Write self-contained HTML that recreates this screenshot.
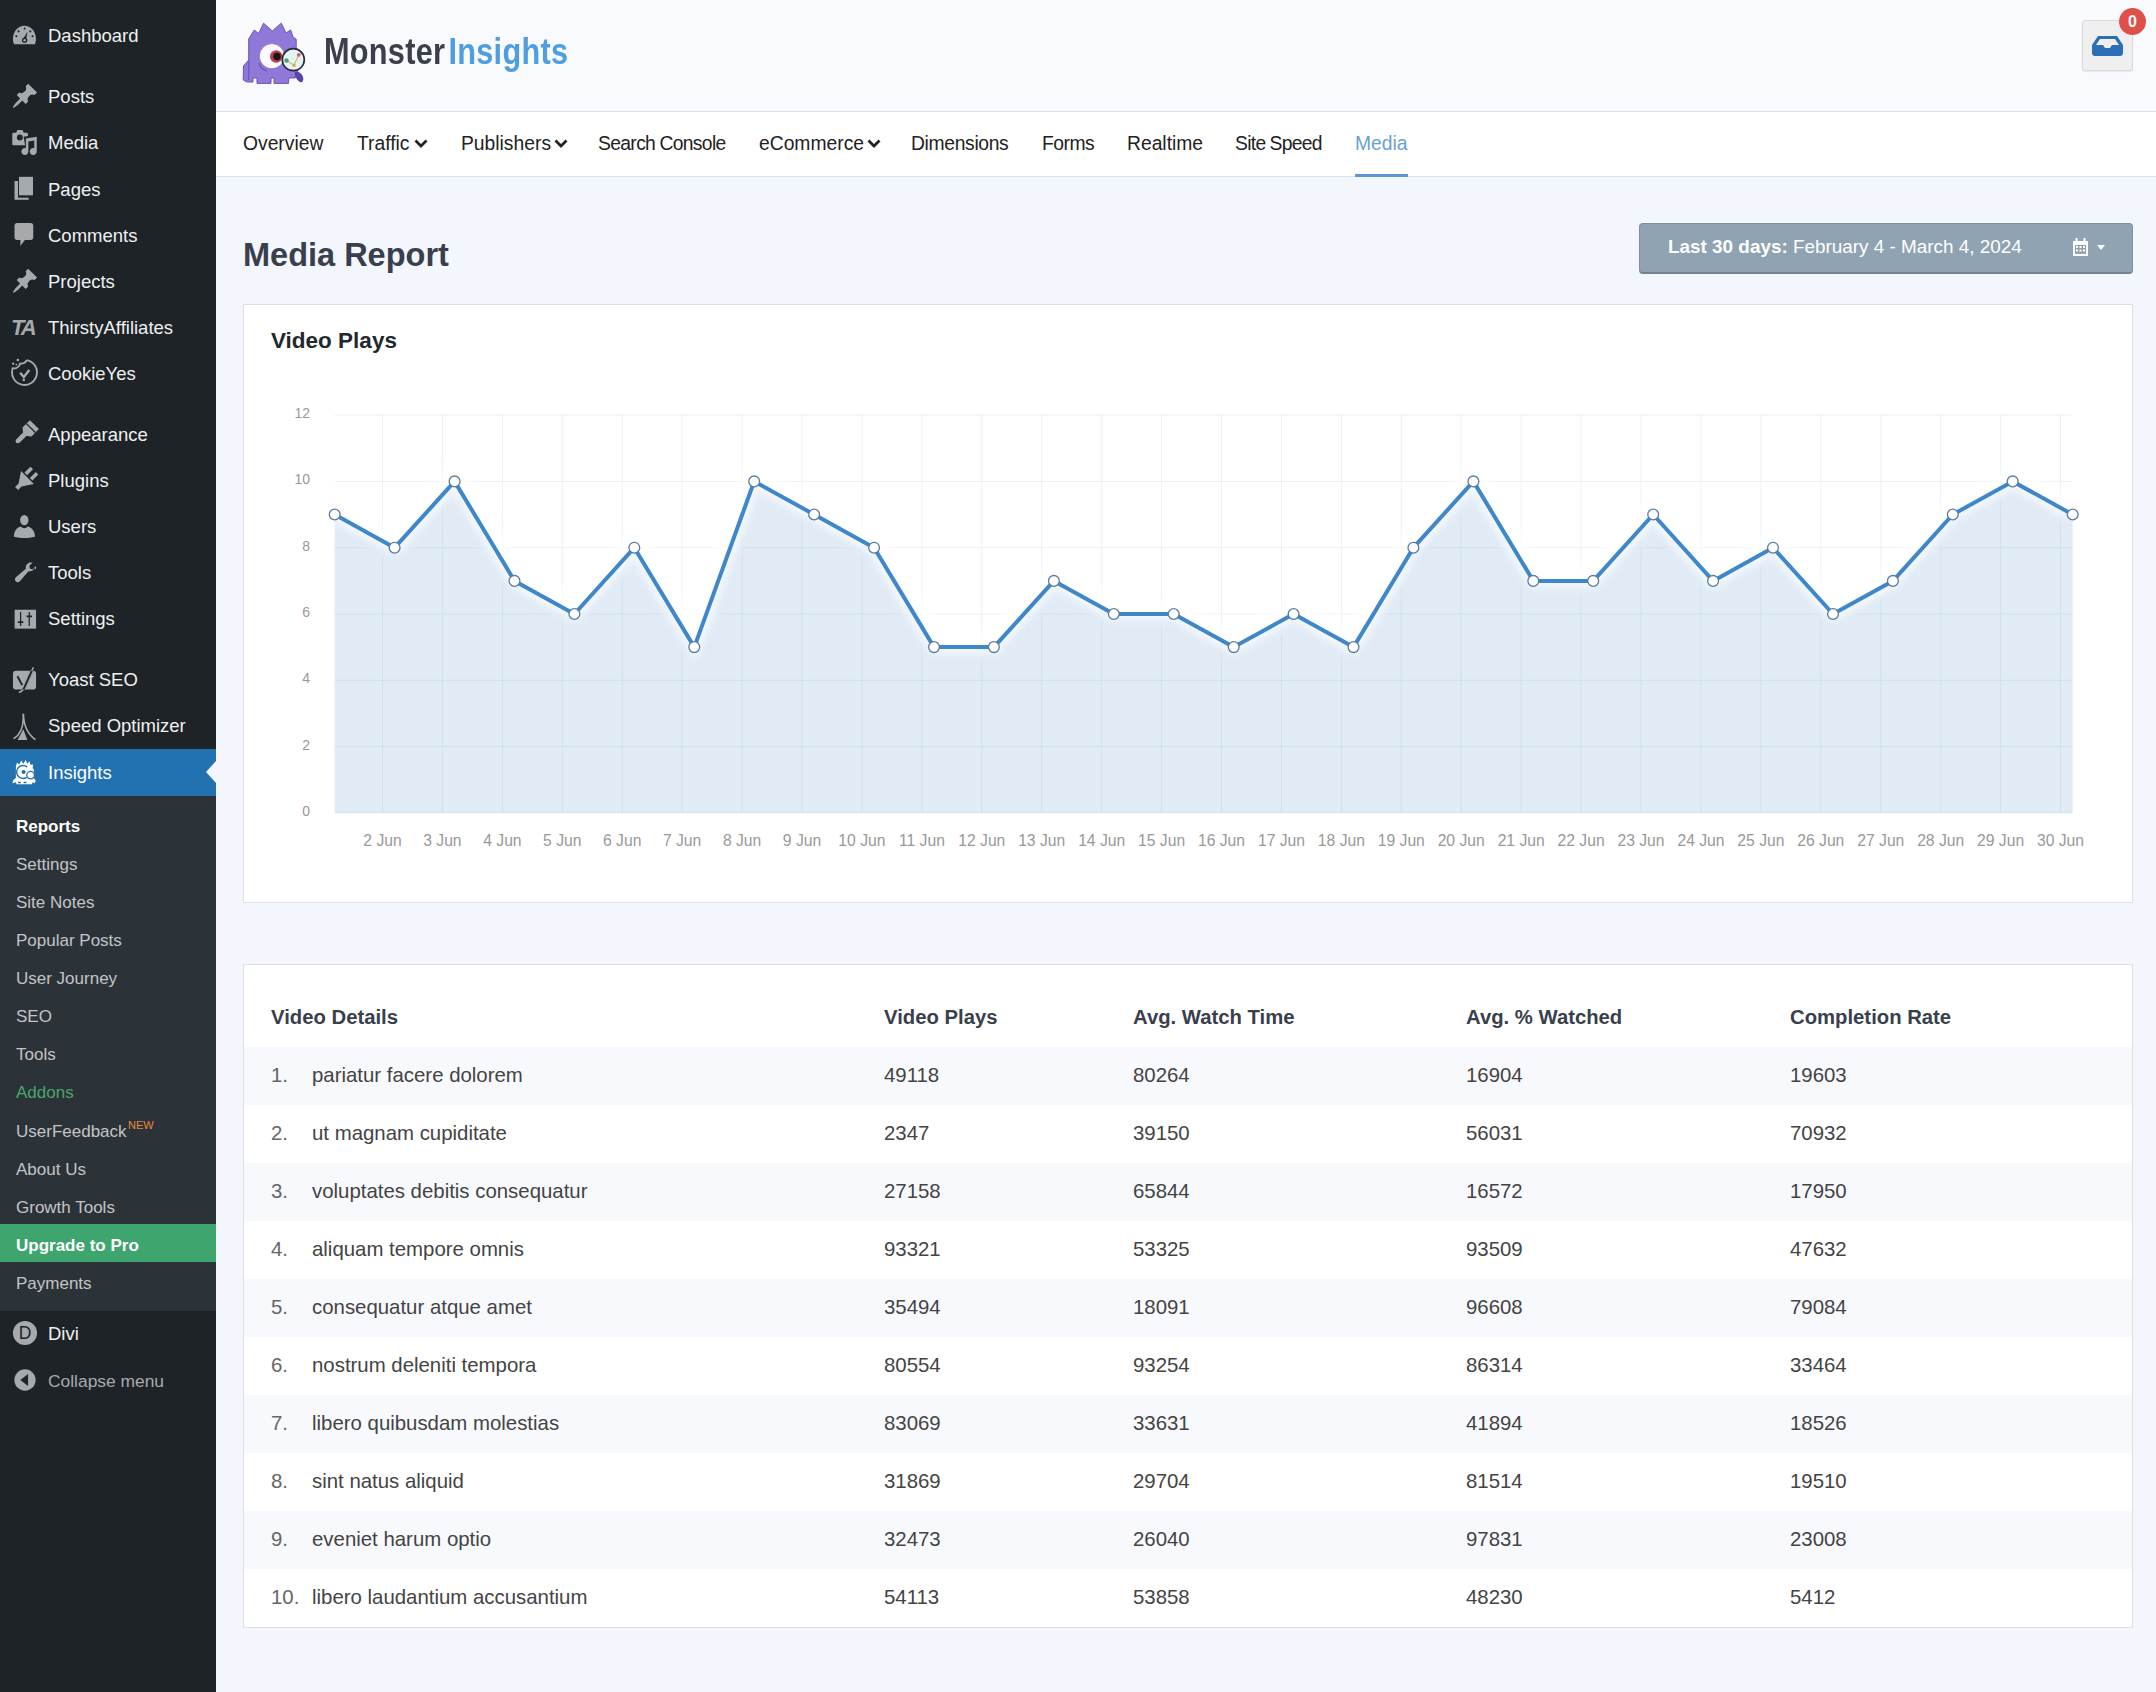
<!DOCTYPE html>
<html><head><meta charset="utf-8">
<style>
*{box-sizing:border-box;margin:0;padding:0}
html,body{width:2156px;height:1692px;overflow:hidden}
body{font-family:"Liberation Sans",sans-serif;background:#f3f6fc;position:relative}
.abs{position:absolute}
#side{position:absolute;left:0;top:0;width:216px;height:1692px;background:#1d2327}
.mi{position:absolute;left:0;width:216px;height:46px;line-height:46px;color:#f0f0f1;font-size:18.5px;white-space:nowrap}
.mi .t{position:absolute;left:48px;top:1px}
.mi svg{position:absolute;left:11px;top:9px;width:28px;height:28px}
#sub{position:absolute;left:0;top:796px;width:216px;height:515px;background:#2c3338}
.si{position:absolute;left:16px;margin-top:3px;height:38px;line-height:38px;color:#c3c4c7;font-size:17px;white-space:nowrap}
#hdr{position:absolute;left:216px;top:0;width:1940px;height:112px;background:#f9fafd;border-bottom:1px solid #dcdfe3}
#nav{position:absolute;left:216px;top:112px;width:1940px;height:65px;background:#fff;border-bottom:1px solid #d9e0ea}
.nv{position:absolute;top:0;height:64px;line-height:64px;font-size:19.3px;color:#222;white-space:nowrap}
.th{position:absolute;height:30px;line-height:30px;font-size:20.3px;font-weight:bold;color:#393f4c;white-space:nowrap}
.td{position:absolute;margin-top:-1px;height:58px;line-height:58px;font-size:20.4px;color:#444;white-space:nowrap}
.td.num{color:#666}
.card{position:absolute;left:243px;width:1890px;background:#fff;border:1px solid #dcdfe3}
</style></head><body>
<div id="side">
<div class="mi" style="top:12px"><svg viewBox="0 0 20 20"><path fill="#a7aaad" d="M2.2 16.6C1.6 15.3 1.4 14 1.4 12.6 1.4 7.6 5.1 3.4 9.6 3.4s8.2 4.2 8.2 9.2c0 1.4-.2 2.7-.8 4z"/><g fill="#1d2327"><circle cx="5.4" cy="7.4" r=".75"/><circle cx="9.8" cy="5.4" r=".75"/><circle cx="13.8" cy="7.4" r=".75"/><circle cx="3.8" cy="10.9" r=".75"/><circle cx="15.4" cy="10.9" r=".75"/><path d="M11.9 7.6L10.9 12.2c.5.4.8.9.8 1.5 0 1.1-.9 1.9-2 1.9s-2-.8-2-1.9c0-.9.6-1.6 1.4-1.8z"/></g><circle cx="9.7" cy="13.7" r=".9" fill="#a7aaad"/></svg><span class="t">Dashboard</span></div>
<div class="mi" style="top:73px"><svg viewBox="0 0 20 20"><path fill="#a7aaad" d="M10.44 3.02l1.82-1.82 6.36 6.35-1.83 1.82c-1.05-.68-2.48-.57-3.41.36l-.75.75c-.93.93-1.04 2.35-.35 3.41l-1.83 1.82-2.41-2.41-2.8 2.79c-.42.42-3.38 2.71-3.8 2.29s1.86-3.39 2.28-3.81l2.79-2.79L4.1 9.36l1.83-1.82c1.05.69 2.48.57 3.4-.36l.75-.75c.93-.92 1.05-2.35.36-3.41z"/></svg><span class="t">Posts</span></div>
<div class="mi" style="top:119px"><svg viewBox="0 0 20 20"><path fill="#a7aaad" d="M4.6 1.4h3.6l.9 2h2c.6 0 1 .4 1 1v7c0 .6-.4 1-1 1H1.9c-.6 0-1-.4-1-1v-7c0-.6.4-1 1-1h1.8z"/><circle cx="6.3" cy="6.8" r="2.1" fill="#1d2327"/><path fill="#1d2327" d="M9 6.3l10.3-1.6V17c0 1.8-1.4 3.2-3.2 3.2-1.3 0-2.4-.8-2.9-1.9-.5 1.1-1.6 1.9-2.9 1.9-1.8 0-3.2-1.4-3.2-3.2s1.4-3.2 3.2-3.2l-1.3-7.5z"/><path fill="#a7aaad" d="M10.6 7.5l7.8-1.3v10.6c0 1.4-1.1 2.5-2.5 2.5s-2.5-1.1-2.5-2.5 1.1-2.5 2.5-2.5c.2 0 .5 0 .7.1V8.9l-4.2.7v7.2c0 1.4-1.1 2.5-2.5 2.5s-2.5-1.1-2.5-2.5 1.1-2.5 2.5-2.5c.2 0 .5 0 .7.1z"/></svg><span class="t">Media</span></div>
<div class="mi" style="top:166px"><svg viewBox="0 0 20 20"><path fill="#a7aaad" d="M2.5 4.3h10.1v13.4H2.5z"/><path fill="#1d2327" d="M5 .6h11.4v15.6H5z"/><path fill="#a7aaad" d="M5.7 1.3h10v13.2h-10z"/></svg><span class="t">Pages</span></div>
<div class="mi" style="top:212px"><svg viewBox="0 0 20 20"><path fill="#a7aaad" d="M4.3 1.4h9.8c1 0 1.8.8 1.8 1.8v8.6c0 1-.8 1.8-1.8 1.8H9.9l-3.2 4.2v-4.2H4.3c-1 0-1.8-.8-1.8-1.8V3.2c0-1 .8-1.8 1.8-1.8z"/></svg><span class="t">Comments</span></div>
<div class="mi" style="top:258px"><svg viewBox="0 0 20 20"><path fill="#a7aaad" d="M10.44 3.02l1.82-1.82 6.36 6.35-1.83 1.82c-1.050-.68-2.48-.57-3.41.36l-.75.75c-.93.93-1.04 2.35-.35 3.41l-1.83 1.82-2.41-2.41-2.8 2.79c-.42.42-3.38 2.71-3.8 2.29s1.86-3.39 2.28-3.81l2.79-2.79L4.1 9.36l1.83-1.82c1.05.69 2.48.57 3.4-.36l.75-.75c.93-.92 1.05-2.35.36-3.41z"/></svg><span class="t">Projects</span></div>
<div class="mi" style="top:304px"><span style="position:absolute;left:11px;top:1px;font-weight:bold;font-style:italic;font-size:22px;letter-spacing:-2px;color:#a7aaad">TA</span><span class="t">ThirstyAffiliates</span></div>
<div class="mi" style="top:350px"><svg viewBox="0 0 20 20" style="left:10px;top:8px;width:29px;height:29px"><path fill="none" stroke="#a7aaad" stroke-width="1.3" d="M11.5 1.5A8.6 8.6 0 1 1 1.9 7.1C4.5 7.5 6.5 6 7 3.8 8.8 4 10.8 3.2 11.5 1.5"/><path fill="none" stroke="#a7aaad" stroke-width="1.7" d="M7 10.2l2.5 3 3.8-5"/><circle cx="5.4" cy="1.4" r=".9" fill="#a7aaad"/><circle cx="2.2" cy="3.9" r=".8" fill="#a7aaad"/><circle cx="4.4" cy="4.6" r=".6" fill="#a7aaad"/><circle cx="9.5" cy="15.2" r=".9" fill="#a7aaad"/></svg><span class="t">CookieYes</span></div>
<div class="mi" style="top:411px"><svg viewBox="0 0 20 20"><g transform="rotate(45 10 10)"><path fill="#a7aaad" d="M5.5 0.5h9v7.5l-2.5 2h-4L5.5 8z"/><path fill="#1d2327" d="M5.5 3.6h9v.9h-9z"/><path fill="#a7aaad" d="M8.3 9.5h3.4v7.5c0 1-.8 1.8-1.7 1.8s-1.7-.8-1.7-1.8z"/></g></svg><span class="t">Appearance</span></div>
<div class="mi" style="top:457px"><svg viewBox="0 0 20 20"><g transform="rotate(45 10 10)"><path fill="#a7aaad" d="M6 .5h2.6v6H6zM11.4 .5H14v6h-2.6z"/><path fill="#a7aaad" d="M3.5 7.5h13L11.5 15v3.5h-3V15z"/></g></svg><span class="t">Plugins</span></div>
<div class="mi" style="top:503px"><svg viewBox="0 0 20 20"><ellipse cx="9.5" cy="5.8" rx="3" ry="3.7" fill="#a7aaad"/><path fill="#a7aaad" d="M2.1 17.6c0-3.6 1.8-6.4 5-7.2.7.8 1.5 1.2 2.4 1.2s1.7-.4 2.4-1.2c3.2.8 5.2 3.6 5.2 7.2-2.3.6-4.8.9-7.5.9s-5.2-.3-7.5-.9z"/></svg><span class="t">Users</span></div>
<div class="mi" style="top:549px"><svg viewBox="0 0 20 20"><path fill="#a7aaad" d="M16.7 7.2c-.6 1.7-2.4 2.7-4.2 2.3L6.3 16.6c-.8.9-2.1.9-2.9.1s-.8-2.1.1-2.9l7.1-6.2c-.4-1.8.6-3.6 2.3-4.2.8-.3 1.7-.3 2.5 0l-2.3 2.2.4 2.1 2.1.4 2.2-2.3c.2.8.2 1.6-.1 2.4z"/></svg><span class="t">Tools</span></div>
<div class="mi" style="top:595px"><svg viewBox="0 0 20 20"><path fill="#a7aaad" d="M2.6 4.1h15.3v13.5H2.6z"/><path fill="#1d2327" d="M6.4 5.7h.9v10h-.9zM12.6 5.7h.9v10h-.9zM4.9 12.3h3.9v1.2H4.9zM11.1 8.2h3.9v1.2h-3.9z"/></svg><span class="t">Settings</span></div>
<div class="mi" style="top:656px"><svg viewBox="0 0 20 20"><defs><clipPath id="yq"><rect x="1.4" y="4.1" width="16.5" height="13.4"/></clipPath></defs><rect x="1.4" y="4.1" width="16.5" height="13.4" rx="2.2" fill="#a7aaad"/><path fill="none" stroke="#1d2327" stroke-width="2.6" d="M16 1.6L9.6 16c-.8 1.9-1.9 3.1-4 3.6"/><path fill="none" stroke="#a7aaad" stroke-width="1.1" d="M16 1.6L9.6 16c-.8 1.9-1.9 3.1-4 3.6"/><g clip-path="url(#yq)"><path fill="none" stroke="#a7aaad" stroke-width="3" d="M16 1.6L9.6 16c-.8 1.9-1.9 3.1-4 3.6"/><path fill="none" stroke="#1d2327" stroke-width="1.4" d="M16 1.6L9.6 16c-.8 1.9-1.9 3.1-4 3.6M4.6 8l3.4 6.4"/></g></svg><span class="t">Yoast SEO</span></div>
<div class="mi" style="top:702px"><svg viewBox="0 0 20 20" style="top:8px;height:30px;width:28px" preserveAspectRatio="none"><path fill="none" stroke="#a7aaad" stroke-width="1.1" d="M8.6 2.5C9.3 10 7.5 16 1.8 19.2M8.9 2.5C9 10 11 15.5 17.5 19.8"/><path fill="#a7aaad" d="M4.5 20.3l4.3-7.5 3 7.5z"/></svg><span class="t">Speed Optimizer</span></div>
<div class="mi" style="top:749px;background:#2271b1;height:47px;color:#fff"><svg viewBox="0 0 20 20"><path fill="#fff" d="M3.5 5.5l1-2.2 1.3 1.5 1.5-3 1.5 2.3L10.5 1.5l1.2 2.6 1.6-1.8.6 2.6 1.9-.3-.3 2.4c.6.8.9 1.6.9 2.5v5l1.3 1.8-.9 1.7-1.3-.6-.6 1.4H4l-.5-1.4-2.5.6.6-2.2 1.9-1.5V8z"/><path fill="none" stroke="#2271b1" stroke-width="1" d="M11.5 6.5C10.7 5.8 9.7 5.4 8.6 5.4c-2.6 0-4.6 2.1-4.6 4.6s2 4.6 4.6 4.6c1 0 1.9-.3 2.6-.8"/><circle cx="9" cy="10" r="1.5" fill="#2271b1"/><circle cx="14" cy="12.2" r="2.7" fill="#fff" stroke="#2271b1" stroke-width=".9"/><path fill="#2271b1" d="M5 17h2v1H5zM9 17h2v1H9z"/></svg><span class="t">Insights</span>
<div class="abs" style="left:206px;top:12px;width:0;height:0;border-top:11px solid transparent;border-bottom:11px solid transparent;border-right:10px solid #f3f6fc"></div></div>
<div id="sub">
<div class="si" style="top:9px;color:#fff;font-weight:bold">Reports</div>
<div class="si" style="top:47px">Settings</div>
<div class="si" style="top:85px">Site Notes</div>
<div class="si" style="top:123px">Popular Posts</div>
<div class="si" style="top:161px">User Journey</div>
<div class="si" style="top:199px">SEO</div>
<div class="si" style="top:237px">Tools</div>
<div class="si" style="top:275px;color:#4aa571">Addons</div>
<div class="si" style="top:314px">UserFeedback<span style="position:absolute;left:112px;top:-7.5px;color:#e8893a;font-size:11px">NEW</span></div>
<div class="si" style="top:352px">About Us</div>
<div class="si" style="top:390px">Growth Tools</div>
<div class="abs" style="left:0;top:428px;width:216px;height:38px;background:#3fa56f"></div>
<div class="si" style="top:428px;color:#fff;font-weight:bold">Upgrade to Pro</div>
<div class="si" style="top:466px">Payments</div>
</div>
<div class="mi" style="top:1309.5px"><svg viewBox="0 0 20 20"><circle cx="10" cy="10" r="8.6" fill="#a7aaad"/><text x="10" y="14.6" text-anchor="middle" font-family="Liberation Sans" font-size="12.5" fill="#1d2327">D</text></svg><span class="t">Divi</span></div>
<div class="mi" style="top:1357px;color:#a7aaad;font-size:17.4px"><svg viewBox="0 0 20 20" style="left:11px"><circle cx="10" cy="10" r="7.6" fill="#a7aaad"/><path fill="#1d2327" d="M12.2 5.8v8.4L6.6 10z"/></svg><span class="t">Collapse menu</span></div>
</div>
<div id="hdr">
<svg class="abs" style="left:20px;top:16px" width="80" height="74" viewBox="0 0 80 74">
<path fill="#8f78d8" stroke="#6b55b8" stroke-width="1" stroke-linejoin="round" d="M12.7 23L18.2 14l4.5 3.5 4.9-10.3 8.7 7.7 9-7.7 4.7 9.8 4.7-3 2.3 7 3.2 2.2V34l2 20-3 8h-6.3l-.4 5.4H38V62h-3v5.4H21V62h-4v4h-6l-3.8-2 .3-14 5.2-6z"/>
<path fill="none" stroke="#6b55b8" stroke-width="1.2" d="M23 47c1 4 4 7 8 8M12.7 44v20"/>
<circle cx="35.9" cy="40.2" r="12.6" fill="#fbfbff" stroke="#7b68c0" stroke-width=".8"/>
<circle cx="40.2" cy="40.5" r="6.2" fill="#b8404a"/>
<circle cx="41" cy="40.5" r="3.7" fill="#161616"/>
<path fill="#5a43a8" d="M59 56c3-1 7 1 8 5s-1 6-3 5-6-5-5-10z"/>
<circle cx="57.3" cy="43.7" r="11" fill="#e6f3f2" stroke="#2b2b3b" stroke-width="1.7"/>
<path fill="none" stroke="#d9a74a" stroke-width="1" d="M50.5 44.5l7.5 4.7 4.8-10.4"/>
<circle cx="50.5" cy="44.5" r="2.2" fill="#3aa87a"/><circle cx="62.8" cy="38.8" r="1.9" fill="#d05a6a"/><circle cx="58" cy="49.2" r="1.7" fill="#d9a74a"/>
</svg>
<div class="abs" style="left:108px;top:27px;font-size:37px;font-weight:bold;line-height:50px;white-space:nowrap;transform:scaleX(.83);transform-origin:0 0;letter-spacing:.3px"><span style="color:#3a3f4b">Monster</span><span style="color:#4e9ee0;margin-left:4px">Insights</span></div>
<div class="abs" style="left:1866px;top:20px;width:51px;height:51px;background:#efeff0;border:1px solid #d7d9dc;border-radius:3px;box-shadow:0 1px 1px rgba(0,0,0,.08)">
<svg class="abs" style="left:9px;top:14px" width="31" height="21" viewBox="0 0 31 21"><path fill="#2d6fb7" d="M6 1h19l6 9v8c0 1.7-1.3 3-3 3H3c-1.7 0-3-1.3-3-3v-8zM8 4l-4 6h7l2 3h5l2-3h7l-4-6z"/></svg>
</div>
<div class="abs" style="left:1903px;top:8px;width:27px;height:27px;border-radius:50%;background:#e0504a;color:#fff;font-weight:bold;font-size:16px;line-height:27px;text-align:center">0</div>
</div>
<div id="nav">
<div class="nv" style="left:27px">Overview</div>
<div class="nv" style="left:141px">Traffic<svg width="14" height="9" viewBox="0 0 14 9" style="margin-left:4px;vertical-align:2px"><path d="M1.5 1.5l5.5 5.5 5.5-5.5" fill="none" stroke="#222" stroke-width="2.8"/></svg></div>
<div class="nv" style="left:245px">Publishers<svg width="14" height="9" viewBox="0 0 14 9" style="margin-left:3px;vertical-align:2px"><path d="M1.5 1.5l5.5 5.5 5.5-5.5" fill="none" stroke="#222" stroke-width="2.8"/></svg></div>
<div class="nv" style="left:382px;letter-spacing:-.65px;word-spacing:-.5px">Search Console</div>
<div class="nv" style="left:543px">eCommerce<svg width="14" height="9" viewBox="0 0 14 9" style="margin-left:3px;vertical-align:2px"><path d="M1.5 1.5l5.5 5.5 5.5-5.5" fill="none" stroke="#222" stroke-width="2.8"/></svg></div>
<div class="nv" style="left:695px;letter-spacing:-.33px">Dimensions</div>
<div class="nv" style="left:826px;letter-spacing:-.5px">Forms</div>
<div class="nv" style="left:911px">Realtime</div>
<div class="nv" style="left:1019px;letter-spacing:-.7px;word-spacing:-.5px">Site Speed</div>
<div class="nv" style="left:1139px;color:#6a9fd4">Media<div class="abs" style="left:0;right:0;top:62px;height:3px;background:#5b98d2"></div></div>
</div>
<div class="abs" style="left:243px;top:236.5px;font-size:32.5px;font-weight:bold;color:#393f4c">Media Report</div>
<div class="abs" style="left:1639px;top:223px;width:494px;height:51px;background:#8fa3b2;border-radius:4px;border:1px solid #7d909d;border-bottom:2px solid #6f8493;color:#fff;font-size:18.9px;line-height:48px;white-space:nowrap"><span style="position:absolute;left:28px;top:-1px"><b>Last 30 days:</b> February 4 - March 4, 2024</span>
<svg class="abs" style="left:432px;top:13px" width="17" height="20" viewBox="0 0 17 20"><path fill="#fff" d="M1 4h15v15H1z"/><path fill="#fff" d="M3.5 1h2v4h-2zM11.5 1h2v4h-2z"/><path fill="#8fa3b2" d="M3 8h11v9H3z"/><path fill="#fff" d="M4 9h2v2H4zM7.5 9h2v2h-2zM11 9h2v2h-2zM4 12.5h2v2H4zM7.5 12.5h2v2h-2zM11 12.5h2v2h-2z"/></svg>
<svg class="abs" style="left:456px;top:20px" width="10" height="7" viewBox="0 0 10 7"><path fill="#fff" d="M1 1h8L5 6z"/></svg>
</div>
<div class="card" style="top:304px;height:599px"></div>
<div class="abs" style="left:271px;top:328px;font-size:22.5px;font-weight:bold;color:#23282d">Video Plays</div>
<svg class="abs" style="left:0;top:0" width="2156" height="1692" viewBox="0 0 2156 1692">
<defs><filter id="gl" x="-5%" y="-30%" width="110%" height="160%"><feGaussianBlur stdDeviation="7"/></filter><filter id="gl2" x="-5%" y="-30%" width="110%" height="160%"><feGaussianBlur stdDeviation="4"/></filter></defs>
<path d="M334.7 415.1H2072.7 M334.7 481.4H2072.7 M334.7 547.7H2072.7 M334.7 614.0H2072.7 M334.7 680.3H2072.7 M334.7 746.6H2072.7 M334.7 812.9H2072.7 M382.5 415.1V812.9 M442.4 415.1V812.9 M502.4 415.1V812.9 M562.3 415.1V812.9 M622.2 415.1V812.9 M682.1 415.1V812.9 M742.1 415.1V812.9 M802.0 415.1V812.9 M861.9 415.1V812.9 M921.9 415.1V812.9 M981.8 415.1V812.9 M1041.7 415.1V812.9 M1101.7 415.1V812.9 M1161.6 415.1V812.9 M1221.5 415.1V812.9 M1281.5 415.1V812.9 M1341.4 415.1V812.9 M1401.3 415.1V812.9 M1461.2 415.1V812.9 M1521.2 415.1V812.9 M1581.1 415.1V812.9 M1641.0 415.1V812.9 M1701.0 415.1V812.9 M1760.9 415.1V812.9 M1820.8 415.1V812.9 M1880.8 415.1V812.9 M1940.7 415.1V812.9 M2000.6 415.1V812.9 M2060.5 415.1V812.9" stroke="#eef0f4" stroke-width="1" fill="none"/>
<polyline points="334.7,514.5 394.6,547.7 454.6,481.4 514.5,580.9 574.4,614.0 634.3,547.7 694.3,647.1 754.2,481.4 814.1,514.5 874.1,547.7 934.0,647.1 993.9,647.1 1053.9,580.9 1113.8,614.0 1173.7,614.0 1233.7,647.1 1293.6,614.0 1353.5,647.1 1413.4,547.7 1473.4,481.4 1533.3,580.9 1593.2,580.9 1653.2,514.5 1713.1,580.9 1773.0,547.7 1833.0,614.0 1892.9,580.9 1952.8,514.5 2012.7,481.4 2072.7,514.5" fill="none" stroke="#ffffff" stroke-width="24" filter="url(#gl)"/>
<polygon points="334.7,812.9 334.7,514.5 394.6,547.7 454.6,481.4 514.5,580.9 574.4,614.0 634.3,547.7 694.3,647.1 754.2,481.4 814.1,514.5 874.1,547.7 934.0,647.1 993.9,647.1 1053.9,580.9 1113.8,614.0 1173.7,614.0 1233.7,647.1 1293.6,614.0 1353.5,647.1 1413.4,547.7 1473.4,481.4 1533.3,580.9 1593.2,580.9 1653.2,514.5 1713.1,580.9 1773.0,547.7 1833.0,614.0 1892.9,580.9 1952.8,514.5 2012.7,481.4 2072.7,514.5 2072.7,812.9" fill="#3c82c8" fill-opacity=".16"/>
<polyline points="334.7,514.5 394.6,547.7 454.6,481.4 514.5,580.9 574.4,614.0 634.3,547.7 694.3,647.1 754.2,481.4 814.1,514.5 874.1,547.7 934.0,647.1 993.9,647.1 1053.9,580.9 1113.8,614.0 1173.7,614.0 1233.7,647.1 1293.6,614.0 1353.5,647.1 1413.4,547.7 1473.4,481.4 1533.3,580.9 1593.2,580.9 1653.2,514.5 1713.1,580.9 1773.0,547.7 1833.0,614.0 1892.9,580.9 1952.8,514.5 2012.7,481.4 2072.7,514.5" fill="none" stroke="#ffffff" stroke-width="12" filter="url(#gl2)" opacity=".75"/>
<polyline points="334.7,514.5 394.6,547.7 454.6,481.4 514.5,580.9 574.4,614.0 634.3,547.7 694.3,647.1 754.2,481.4 814.1,514.5 874.1,547.7 934.0,647.1 993.9,647.1 1053.9,580.9 1113.8,614.0 1173.7,614.0 1233.7,647.1 1293.6,614.0 1353.5,647.1 1413.4,547.7 1473.4,481.4 1533.3,580.9 1593.2,580.9 1653.2,514.5 1713.1,580.9 1773.0,547.7 1833.0,614.0 1892.9,580.9 1952.8,514.5 2012.7,481.4 2072.7,514.5" fill="none" stroke="#3f87cb" stroke-width="4" stroke-linejoin="round"/>
<circle cx="334.7" cy="514.5" r="5.4" fill="#fff" stroke="#5b7b9e" stroke-width="1.3"/>
<circle cx="394.6" cy="547.7" r="5.4" fill="#fff" stroke="#5b7b9e" stroke-width="1.3"/>
<circle cx="454.6" cy="481.4" r="5.4" fill="#fff" stroke="#5b7b9e" stroke-width="1.3"/>
<circle cx="514.5" cy="580.9" r="5.4" fill="#fff" stroke="#5b7b9e" stroke-width="1.3"/>
<circle cx="574.4" cy="614.0" r="5.4" fill="#fff" stroke="#5b7b9e" stroke-width="1.3"/>
<circle cx="634.3" cy="547.7" r="5.4" fill="#fff" stroke="#5b7b9e" stroke-width="1.3"/>
<circle cx="694.3" cy="647.1" r="5.4" fill="#fff" stroke="#5b7b9e" stroke-width="1.3"/>
<circle cx="754.2" cy="481.4" r="5.4" fill="#fff" stroke="#5b7b9e" stroke-width="1.3"/>
<circle cx="814.1" cy="514.5" r="5.4" fill="#fff" stroke="#5b7b9e" stroke-width="1.3"/>
<circle cx="874.1" cy="547.7" r="5.4" fill="#fff" stroke="#5b7b9e" stroke-width="1.3"/>
<circle cx="934.0" cy="647.1" r="5.4" fill="#fff" stroke="#5b7b9e" stroke-width="1.3"/>
<circle cx="993.9" cy="647.1" r="5.4" fill="#fff" stroke="#5b7b9e" stroke-width="1.3"/>
<circle cx="1053.9" cy="580.9" r="5.4" fill="#fff" stroke="#5b7b9e" stroke-width="1.3"/>
<circle cx="1113.8" cy="614.0" r="5.4" fill="#fff" stroke="#5b7b9e" stroke-width="1.3"/>
<circle cx="1173.7" cy="614.0" r="5.4" fill="#fff" stroke="#5b7b9e" stroke-width="1.3"/>
<circle cx="1233.7" cy="647.1" r="5.4" fill="#fff" stroke="#5b7b9e" stroke-width="1.3"/>
<circle cx="1293.6" cy="614.0" r="5.4" fill="#fff" stroke="#5b7b9e" stroke-width="1.3"/>
<circle cx="1353.5" cy="647.1" r="5.4" fill="#fff" stroke="#5b7b9e" stroke-width="1.3"/>
<circle cx="1413.4" cy="547.7" r="5.4" fill="#fff" stroke="#5b7b9e" stroke-width="1.3"/>
<circle cx="1473.4" cy="481.4" r="5.4" fill="#fff" stroke="#5b7b9e" stroke-width="1.3"/>
<circle cx="1533.3" cy="580.9" r="5.4" fill="#fff" stroke="#5b7b9e" stroke-width="1.3"/>
<circle cx="1593.2" cy="580.9" r="5.4" fill="#fff" stroke="#5b7b9e" stroke-width="1.3"/>
<circle cx="1653.2" cy="514.5" r="5.4" fill="#fff" stroke="#5b7b9e" stroke-width="1.3"/>
<circle cx="1713.1" cy="580.9" r="5.4" fill="#fff" stroke="#5b7b9e" stroke-width="1.3"/>
<circle cx="1773.0" cy="547.7" r="5.4" fill="#fff" stroke="#5b7b9e" stroke-width="1.3"/>
<circle cx="1833.0" cy="614.0" r="5.4" fill="#fff" stroke="#5b7b9e" stroke-width="1.3"/>
<circle cx="1892.9" cy="580.9" r="5.4" fill="#fff" stroke="#5b7b9e" stroke-width="1.3"/>
<circle cx="1952.8" cy="514.5" r="5.4" fill="#fff" stroke="#5b7b9e" stroke-width="1.3"/>
<circle cx="2012.7" cy="481.4" r="5.4" fill="#fff" stroke="#5b7b9e" stroke-width="1.3"/>
<circle cx="2072.7" cy="514.5" r="5.4" fill="#fff" stroke="#5b7b9e" stroke-width="1.3"/>
<text x="310" y="418.1" text-anchor="end" font-family="Liberation Sans" font-size="14" fill="#999">12</text>
<text x="310" y="484.4" text-anchor="end" font-family="Liberation Sans" font-size="14" fill="#999">10</text>
<text x="310" y="550.7" text-anchor="end" font-family="Liberation Sans" font-size="14" fill="#999">8</text>
<text x="310" y="617.0" text-anchor="end" font-family="Liberation Sans" font-size="14" fill="#999">6</text>
<text x="310" y="683.3" text-anchor="end" font-family="Liberation Sans" font-size="14" fill="#999">4</text>
<text x="310" y="749.6" text-anchor="end" font-family="Liberation Sans" font-size="14" fill="#999">2</text>
<text x="310" y="815.9" text-anchor="end" font-family="Liberation Sans" font-size="14" fill="#999">0</text>
<text x="382.5" y="846" text-anchor="middle" font-family="Liberation Sans" font-size="15.7" fill="#999">2 Jun</text>
<text x="442.4" y="846" text-anchor="middle" font-family="Liberation Sans" font-size="15.7" fill="#999">3 Jun</text>
<text x="502.4" y="846" text-anchor="middle" font-family="Liberation Sans" font-size="15.7" fill="#999">4 Jun</text>
<text x="562.3" y="846" text-anchor="middle" font-family="Liberation Sans" font-size="15.7" fill="#999">5 Jun</text>
<text x="622.2" y="846" text-anchor="middle" font-family="Liberation Sans" font-size="15.7" fill="#999">6 Jun</text>
<text x="682.1" y="846" text-anchor="middle" font-family="Liberation Sans" font-size="15.7" fill="#999">7 Jun</text>
<text x="742.1" y="846" text-anchor="middle" font-family="Liberation Sans" font-size="15.7" fill="#999">8 Jun</text>
<text x="802.0" y="846" text-anchor="middle" font-family="Liberation Sans" font-size="15.7" fill="#999">9 Jun</text>
<text x="861.9" y="846" text-anchor="middle" font-family="Liberation Sans" font-size="15.7" fill="#999">10 Jun</text>
<text x="921.9" y="846" text-anchor="middle" font-family="Liberation Sans" font-size="15.7" fill="#999">11 Jun</text>
<text x="981.8" y="846" text-anchor="middle" font-family="Liberation Sans" font-size="15.7" fill="#999">12 Jun</text>
<text x="1041.7" y="846" text-anchor="middle" font-family="Liberation Sans" font-size="15.7" fill="#999">13 Jun</text>
<text x="1101.7" y="846" text-anchor="middle" font-family="Liberation Sans" font-size="15.7" fill="#999">14 Jun</text>
<text x="1161.6" y="846" text-anchor="middle" font-family="Liberation Sans" font-size="15.7" fill="#999">15 Jun</text>
<text x="1221.5" y="846" text-anchor="middle" font-family="Liberation Sans" font-size="15.7" fill="#999">16 Jun</text>
<text x="1281.5" y="846" text-anchor="middle" font-family="Liberation Sans" font-size="15.7" fill="#999">17 Jun</text>
<text x="1341.4" y="846" text-anchor="middle" font-family="Liberation Sans" font-size="15.7" fill="#999">18 Jun</text>
<text x="1401.3" y="846" text-anchor="middle" font-family="Liberation Sans" font-size="15.7" fill="#999">19 Jun</text>
<text x="1461.2" y="846" text-anchor="middle" font-family="Liberation Sans" font-size="15.7" fill="#999">20 Jun</text>
<text x="1521.2" y="846" text-anchor="middle" font-family="Liberation Sans" font-size="15.7" fill="#999">21 Jun</text>
<text x="1581.1" y="846" text-anchor="middle" font-family="Liberation Sans" font-size="15.7" fill="#999">22 Jun</text>
<text x="1641.0" y="846" text-anchor="middle" font-family="Liberation Sans" font-size="15.7" fill="#999">23 Jun</text>
<text x="1701.0" y="846" text-anchor="middle" font-family="Liberation Sans" font-size="15.7" fill="#999">24 Jun</text>
<text x="1760.9" y="846" text-anchor="middle" font-family="Liberation Sans" font-size="15.7" fill="#999">25 Jun</text>
<text x="1820.8" y="846" text-anchor="middle" font-family="Liberation Sans" font-size="15.7" fill="#999">26 Jun</text>
<text x="1880.8" y="846" text-anchor="middle" font-family="Liberation Sans" font-size="15.7" fill="#999">27 Jun</text>
<text x="1940.7" y="846" text-anchor="middle" font-family="Liberation Sans" font-size="15.7" fill="#999">28 Jun</text>
<text x="2000.6" y="846" text-anchor="middle" font-family="Liberation Sans" font-size="15.7" fill="#999">29 Jun</text>
<text x="2060.5" y="846" text-anchor="middle" font-family="Liberation Sans" font-size="15.7" fill="#999">30 Jun</text>
</svg>
<div class="card" style="top:964px;height:664px"></div>
<div class="th" style="top:1002px;left:271px">Video Details</div><div class="th" style="top:1002px;left:884px">Video Plays</div><div class="th" style="top:1002px;left:1133px">Avg. Watch Time</div><div class="th" style="top:1002px;left:1466px">Avg. % Watched</div><div class="th" style="top:1002px;left:1790px">Completion Rate</div>
<div class="abs" style="left:244px;top:1047px;width:1888px;height:58px;background:#f8f9fd"></div>
<div class="td num" style="top:1047px;left:271px">1.</div><div class="td" style="top:1047px;left:312px">pariatur facere dolorem</div><div class="td" style="top:1047px;left:884px">49118</div><div class="td" style="top:1047px;left:1133px">80264</div><div class="td" style="top:1047px;left:1466px">16904</div><div class="td" style="top:1047px;left:1790px">19603</div>
<div class="td num" style="top:1105px;left:271px">2.</div><div class="td" style="top:1105px;left:312px">ut magnam cupiditate</div><div class="td" style="top:1105px;left:884px">2347</div><div class="td" style="top:1105px;left:1133px">39150</div><div class="td" style="top:1105px;left:1466px">56031</div><div class="td" style="top:1105px;left:1790px">70932</div>
<div class="abs" style="left:244px;top:1163px;width:1888px;height:58px;background:#f8f9fd"></div>
<div class="td num" style="top:1163px;left:271px">3.</div><div class="td" style="top:1163px;left:312px">voluptates debitis consequatur</div><div class="td" style="top:1163px;left:884px">27158</div><div class="td" style="top:1163px;left:1133px">65844</div><div class="td" style="top:1163px;left:1466px">16572</div><div class="td" style="top:1163px;left:1790px">17950</div>
<div class="td num" style="top:1221px;left:271px">4.</div><div class="td" style="top:1221px;left:312px">aliquam tempore omnis</div><div class="td" style="top:1221px;left:884px">93321</div><div class="td" style="top:1221px;left:1133px">53325</div><div class="td" style="top:1221px;left:1466px">93509</div><div class="td" style="top:1221px;left:1790px">47632</div>
<div class="abs" style="left:244px;top:1279px;width:1888px;height:58px;background:#f8f9fd"></div>
<div class="td num" style="top:1279px;left:271px">5.</div><div class="td" style="top:1279px;left:312px">consequatur atque amet</div><div class="td" style="top:1279px;left:884px">35494</div><div class="td" style="top:1279px;left:1133px">18091</div><div class="td" style="top:1279px;left:1466px">96608</div><div class="td" style="top:1279px;left:1790px">79084</div>
<div class="td num" style="top:1337px;left:271px">6.</div><div class="td" style="top:1337px;left:312px">nostrum deleniti tempora</div><div class="td" style="top:1337px;left:884px">80554</div><div class="td" style="top:1337px;left:1133px">93254</div><div class="td" style="top:1337px;left:1466px">86314</div><div class="td" style="top:1337px;left:1790px">33464</div>
<div class="abs" style="left:244px;top:1395px;width:1888px;height:58px;background:#f8f9fd"></div>
<div class="td num" style="top:1395px;left:271px">7.</div><div class="td" style="top:1395px;left:312px">libero quibusdam molestias</div><div class="td" style="top:1395px;left:884px">83069</div><div class="td" style="top:1395px;left:1133px">33631</div><div class="td" style="top:1395px;left:1466px">41894</div><div class="td" style="top:1395px;left:1790px">18526</div>
<div class="td num" style="top:1453px;left:271px">8.</div><div class="td" style="top:1453px;left:312px">sint natus aliquid</div><div class="td" style="top:1453px;left:884px">31869</div><div class="td" style="top:1453px;left:1133px">29704</div><div class="td" style="top:1453px;left:1466px">81514</div><div class="td" style="top:1453px;left:1790px">19510</div>
<div class="abs" style="left:244px;top:1511px;width:1888px;height:58px;background:#f8f9fd"></div>
<div class="td num" style="top:1511px;left:271px">9.</div><div class="td" style="top:1511px;left:312px">eveniet harum optio</div><div class="td" style="top:1511px;left:884px">32473</div><div class="td" style="top:1511px;left:1133px">26040</div><div class="td" style="top:1511px;left:1466px">97831</div><div class="td" style="top:1511px;left:1790px">23008</div>
<div class="td num" style="top:1569px;left:271px">10.</div><div class="td" style="top:1569px;left:312px">libero laudantium accusantium</div><div class="td" style="top:1569px;left:884px">54113</div><div class="td" style="top:1569px;left:1133px">53858</div><div class="td" style="top:1569px;left:1466px">48230</div><div class="td" style="top:1569px;left:1790px">5412</div>
</body></html>
